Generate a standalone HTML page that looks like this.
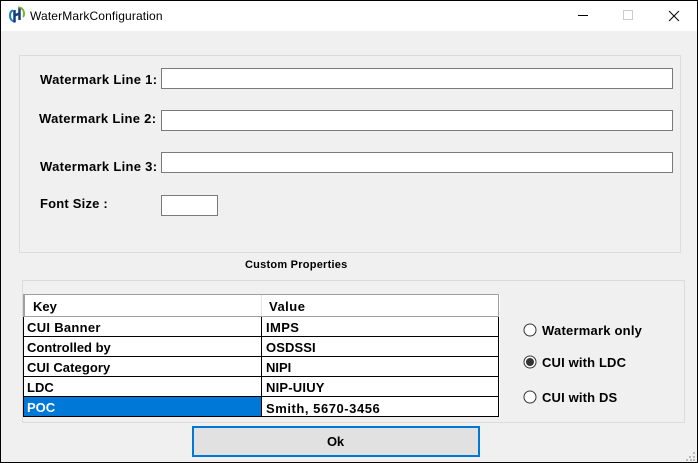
<!DOCTYPE html>
<html><head><meta charset="utf-8"><style>
html,body{margin:0;padding:0;background:#f0f0f0}
#w{position:relative;width:698px;height:463px;overflow:hidden;background:#f0f0f0;font-family:"Liberation Sans",sans-serif;font-size:13px;font-weight:bold;color:#000}
#w div,#w svg{position:absolute;box-sizing:border-box}
.t{white-space:nowrap;line-height:16px}
.i{background:#fff;border:1px solid #7a7a7a}
.g{border:1px solid #dcdcdc}
.l{background:#000}
</style></head><body><div id="w">
<div style="left:0;top:0;width:698px;height:31px;background:#fff"></div>
<svg style="left:8px;top:6px" width="18" height="18" viewBox="0 0 18 18"><path d="M5 4.500C2.500 5 2 7 2 9.500C2 13 4 15.500 7.500 15.500" fill="none" stroke="#1b7fc4" stroke-width="2"/><path d="M10 1.500C14 1.500 16 4 16 8C16 9 16 10 15 11" fill="none" stroke="#7ab32e" stroke-width="2"/><path d="M6.500 4V16.500M11.500 2.500V14M6.500 9.500L11.500 7.500" fill="none" stroke="#123e7c" stroke-width="2.500"/></svg>
<div class="t" style="left:30px;top:8px;font-weight:normal;font-size:12px;letter-spacing:.14px">WaterMarkConfiguration</div>
<div style="left:578px;top:15px;width:10px;height:1px;background:#000"></div>
<div style="left:623px;top:10px;width:10px;height:10px;border:1px solid #ccc"></div>
<svg style="left:668px;top:10px" width="12" height="12" viewBox="0 0 12 12"><path d="M1 1L11 11M11 1L1 11" stroke="#000" stroke-width="1" fill="none"/></svg>

<div class="g" style="left:19px;top:55px;width:662px;height:198px"></div>
<div class="t" style="left:40px;top:72px;letter-spacing:.3px">Watermark Line 1:</div>
<div class="t" style="left:39px;top:111px;letter-spacing:.3px">Watermark Line 2:</div>
<div class="t" style="left:40px;top:159px;letter-spacing:.3px">Watermark Line 3:</div>
<div class="t" style="left:40px;top:196px;letter-spacing:.2px">Font Size :</div>
<div class="i" style="left:161px;top:68px;width:512px;height:21px"></div>
<div class="i" style="left:161px;top:110px;width:512px;height:21px"></div>
<div class="i" style="left:161px;top:152px;width:512px;height:21px"></div>
<div class="i" style="left:161px;top:195px;width:57px;height:21px"></div>

<div class="t" style="left:245px;top:257px;font-size:11px;letter-spacing:.24px">Custom Properties</div>
<div class="g" style="left:22px;top:280px;width:663px;height:143px"></div>

<div style="left:23px;top:294px;width:477px;height:123px;background:#fff"></div>
<div style="left:23px;top:294px;width:476px;height:1px;background:#a0a0a0"></div>
<div style="left:23px;top:295px;width:2px;height:21px;background:#a0a0a0"></div>
<div style="left:498px;top:295px;width:1px;height:21px;background:#a0a0a0"></div>
<div style="left:261px;top:295px;width:1px;height:21px;background:#e4e4e4"></div>
<div style="left:23px;top:316px;width:476px;height:1px;background:#a0a0a0"></div>
<div style="left:24px;top:397px;width:237px;height:19px;background:#0078d7"></div>
<div class="l" style="left:23px;top:336px;width:476px;height:1px"></div>
<div class="l" style="left:23px;top:356px;width:476px;height:1px"></div>
<div class="l" style="left:23px;top:376px;width:476px;height:1px"></div>
<div class="l" style="left:23px;top:396px;width:476px;height:1px"></div>
<div class="l" style="left:23px;top:416px;width:476px;height:1px"></div>
<div class="l" style="left:23px;top:317px;width:1px;height:100px"></div>
<div class="l" style="left:261px;top:317px;width:1px;height:100px"></div>
<div class="l" style="left:498px;top:317px;width:1px;height:100px"></div>

<div class="t" style="left:33px;top:299px">Key</div>
<div class="t" style="left:269px;top:299px;letter-spacing:.5px">Value</div>
<div class="t" style="left:27px;top:320px;letter-spacing:.3px">CUI Banner</div>
<div class="t" style="left:27px;top:340px">Controlled by</div>
<div class="t" style="left:27px;top:360px;letter-spacing:.08px">CUI Category</div>
<div class="t" style="left:27px;top:380px">LDC</div>
<div class="t" style="left:27px;top:400px;color:#fff">POC</div>
<div class="t" style="left:266px;top:320px;letter-spacing:.4px">IMPS</div>
<div class="t" style="left:266px;top:340px;letter-spacing:.1px">OSDSSI</div>
<div class="t" style="left:266px;top:360px">NIPI</div>
<div class="t" style="left:266px;top:380px;letter-spacing:.2px">NIP-UIUY</div>
<div class="t" style="left:266px;top:401px;letter-spacing:.55px">Smith, 5670-3456</div>

<svg style="left:523px;top:323px" width="14" height="14"><circle cx="7" cy="7" r="6" fill="#fff" stroke="#333"/></svg>
<svg style="left:523px;top:355px" width="14" height="14"><circle cx="7" cy="7" r="6" fill="#fff" stroke="#333"/><circle cx="7" cy="7" r="4" fill="#333"/></svg>
<svg style="left:523px;top:390px" width="14" height="14"><circle cx="7" cy="7" r="6" fill="#fff" stroke="#333"/></svg>
<div class="t" style="left:542px;top:323px;letter-spacing:.22px">Watermark only</div>
<div class="t" style="left:542px;top:355px;letter-spacing:.15px">CUI with LDC</div>
<div class="t" style="left:542px;top:390px;letter-spacing:.15px">CUI with DS</div>

<div style="left:192px;top:426px;width:288px;height:31px;background:#e1e1e1;border:2px solid #0078d7"></div>
<div class="t" style="left:327px;top:434px;letter-spacing:-.2px">Ok</div>

<svg style="left:686px;top:451px" width="11" height="11"><g fill="#bbb"><rect x="7" y="1" width="2" height="2"/><rect x="3" y="5" width="2" height="2"/><rect x="7" y="5" width="2" height="2"/><rect x="0" y="8" width="2" height="2"/><rect x="4" y="8" width="2" height="2"/><rect x="7" y="8" width="2" height="2"/></g></svg>

<div style="left:0;top:0;width:698px;height:463px;border:1px solid #000"></div>
</div></body></html>
